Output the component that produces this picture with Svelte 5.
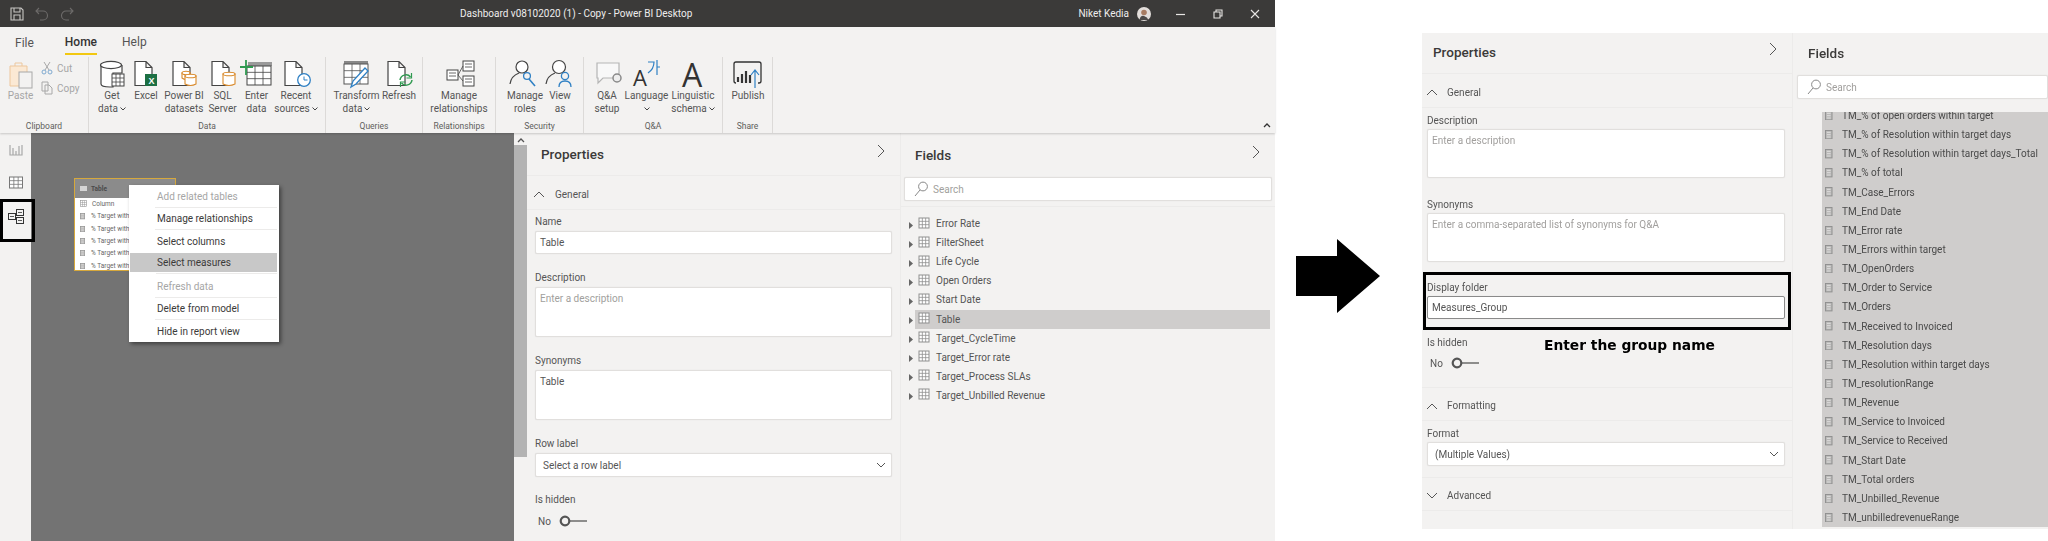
<script>
  const groups = [
    { name: "Data", w: 237, pad: 6, items: [
      { icon: "getdata", w: 34, l: ["Get", "data"], caret: 1 },
      { icon: "excel", w: 34, l: ["Excel"] },
      { icon: "pbi", w: 42, l: ["Power BI", "datasets"] },
      { icon: "sql", w: 35, l: ["SQL", "Server"] },
      { icon: "enter", w: 33, l: ["Enter", "data"] },
      { icon: "recent", w: 46, l: ["Recent", "sources"], caret: 1 }
    ]},
    { name: "Queries", w: 97, pad: 8, items: [
      { icon: "transform", w: 45, l: ["Transform", "data"], caret: 1 },
      { icon: "refresh", w: 40, l: ["Refresh"] }
    ]},
    { name: "Relationships", w: 73, pad: 0, items: [
      { icon: "manage", w: 72, l: ["Manage", "relationships"] }
    ]},
    { name: "Security", w: 88, pad: 10, items: [
      { icon: "roles", w: 38, l: ["Manage", "roles"] },
      { icon: "viewas", w: 32, l: ["View", "as"] }
    ]},
    { name: "Q&A", w: 139, pad: 7, items: [
      { icon: "qa", w: 32, l: ["Q&A", "setup"], off: 0 },
      { icon: "lang", w: 47, l: ["Language", ""], caret: 1 },
      { icon: "ling", w: 46, l: ["Linguistic", "schema"], caret: 1 }
    ]},
    { name: "Share", w: 50, pad: 0, items: [
      { icon: "publish", w: 50, l: ["Publish"] }
    ]}
  ];

  const menu = [
    { t: "Add related tables", off: true, line: true },
    { t: "Manage relationships", line: true },
    { t: "Select columns" },
    { t: "Select measures", sel: true, line: true },
    { t: "Refresh data", off: true, line: true },
    { t: "Delete from model", line: true },
    { t: "Hide in report view" }
  ];

  const tables = ["Error Rate", "FilterSheet", "Life Cycle", "Open Orders", "Start Date", "Table",
    "Target_CycleTime", "Target_Error rate", "Target_Process SLAs", "Target_Unbilled Revenue"];

  const measures = ["TM_% of open orders within target", "TM_% of Resolution within target days",
    "TM_% of Resolution within target days_Total", "TM_% of total", "TM_Case_Errors", "TM_End Date",
    "TM_Error rate", "TM_Errors within target", "TM_OpenOrders", "TM_Order to Service", "TM_Orders",
    "TM_Received to Invoiced", "TM_Resolution days", "TM_Resolution within target days",
    "TM_resolutionRange", "TM_Revenue", "TM_Service to Invoiced", "TM_Service to Received",
    "TM_Start Date", "TM_Total orders", "TM_Unbilled_Revenue", "TM_unbilledrevenueRange"];
</script>

{#snippet doc()}
  <path d="M6 2.5h11l6 6v18H6z M17 2.5v6h6" fill="#fff" stroke="#444" stroke-width="1.2" />
{/snippet}

{#snippet gridIcon(x, y, w, h, c)}
  <rect {x} {y} width={w} height={h} fill="#fff" stroke={c} stroke-width="1" />
  <path d="M{x} {y + h / 3}h{w} M{x} {y + 2 * h / 3}h{w} M{x + w / 3} {y}v{h} M{x + 2 * w / 3} {y}v{h}" stroke={c} stroke-width="0.8" />
{/snippet}

{#snippet can(x, y, w, h)}
  <path d="M{x} {y + 2}v{h - 4}q{w / 2} 3 {w} 0v-{h - 4}z" fill="#fff" stroke="#d98a2b" stroke-width="1.1" />
  <ellipse cx={x + w / 2} cy={y + 2} rx={w / 2} ry="1.8" fill="#fff" stroke="#d98a2b" stroke-width="1.1" />
{/snippet}

{#snippet ribbonIcon(k)}
  <svg class="rib-icon" viewBox="0 0 34 30" width="34" height="30">
    {#if k === "getdata"}
      <path d="M6 6v19q0 3 9 3h3V14h9V6" fill="#fff" stroke="#444" stroke-width="1.2" />
      <ellipse cx="16" cy="6" rx="10.5" ry="3.6" fill="#fff" stroke="#444" stroke-width="1.2" />
      {@render gridIcon(17, 15, 12, 12, "#444")}
    {:else if k === "excel"}
      {@render doc()}
      <rect x="16" y="15" width="12" height="12" fill="#1d7044" />
      <text x="19.5" y="24.5" class="xl">X</text>
    {:else if k === "pbi"}
      {@render doc()}
      <g transform="translate(15 12)">{@render can(0, 0, 8, 9)}</g>
      <g transform="translate(18 15)">{@render can(0, 0, 11, 12)}</g>
    {:else if k === "sql"}
      {@render doc()}
      <g transform="translate(17 13)">{@render can(0, 0, 12, 14)}</g>
    {:else if k === "enter"}
      <path d="M8 3h24v4H8z" fill="#9a9a9a" />
      {@render gridIcon(7, 7, 24, 19, "#444")}
      <path d="M6 1v15 M0 8h13" stroke="#2f9a50" stroke-width="1.8" />
    {:else if k === "recent"}
      {@render doc()}
      <circle cx="25" cy="21" r="6.3" fill="#fff" stroke="#2f80c4" stroke-width="1.3" />
      <path d="M25 17.5V21h3.5" fill="none" stroke="#2f80c4" stroke-width="1" />
    {:else if k === "transform"}
      <rect x="4" y="2" width="24" height="4" fill="#888" />
      {@render gridIcon(4, 5, 24, 20, "#555")}
      <path d="M11 28l2-6 12-13 3 3-12 13z" fill="#fff" stroke="#2f80c4" stroke-width="1.3" />
    {:else if k === "refresh"}
      {@render doc()}
      <path d="M18 21a6 6 0 0 1 10.5-3 M30 21a6 6 0 0 1-10.5 3" fill="none" stroke="#2f9a50" stroke-width="1.5" />
      <path d="M29.5 14v5h-5 M18.5 28v-5h5" fill="none" stroke="#2f9a50" stroke-width="1.2" />
    {:else if k === "manage"}
      <rect x="5" y="11" width="11" height="10" fill="#fff" stroke="#444" />
      <rect x="21" y="2" width="11" height="10" fill="#fff" stroke="#444" />
      <rect x="21" y="17" width="11" height="10" fill="#fff" stroke="#444" />
      <path d="M16 16l5-9 M16 16l5 6 M7 14h7 M7 17h7 M23 5h7 M23 8h7 M23 20h7 M23 23h7" stroke="#444" stroke-width="0.8" fill="none" />
    {:else if k === "roles"}
      <circle cx="14" cy="8" r="6" fill="#fff" stroke="#444" stroke-width="1.2" />
      <path d="M2 25q1-8 9-11" fill="none" stroke="#444" stroke-width="1.2" />
      <circle cx="19" cy="17" r="3.4" fill="none" stroke="#2f80c4" stroke-width="1.3" />
      <path d="M21 20l6 7" stroke="#2f80c4" stroke-width="1.6" />
    {:else if k === "viewas"}
      <circle cx="16" cy="8" r="6.5" fill="#fff" stroke="#444" stroke-width="1.2" />
      <path d="M3 25q1-8 9-11" fill="none" stroke="#444" stroke-width="1.2" />
      <circle cx="22" cy="17" r="3.6" fill="none" stroke="#2f80c4" stroke-width="1.3" />
      <path d="M16 28q0-6 6-6t6 6" fill="none" stroke="#2f80c4" stroke-width="1.3" />
    {:else if k === "qa"}
      <path d="M7 4h22v15H13l-5 5v-5H7z" fill="#f8f8f8" stroke="#b5b5b5" stroke-width="1.2" />
      <circle cx="27" cy="19" r="4" fill="#eee" stroke="#8a8a8a" stroke-width="1.5" />
    {:else if k === "lang"}
      <text x="3" y="27" class="bigA small-a">A</text>
      <path d="M18 3h6q0 7-6 11 M27 1v15 M27 8h3" fill="none" stroke="#2f80c4" stroke-width="1.2" />
    {:else if k === "ling"}
      <text x="6" y="28" class="bigA">A</text>
    {:else if k === "publish"}
      <path d="M5 24q-2 0-2-2V5q0-2 2-2h23q2 0 2 2v17q0 2-2 2h-1" fill="none" stroke="#333" stroke-width="1.3" />
      <path d="M7 23v-5 M11 24v-9 M15 24v-12 M19 24v-8" stroke="#333" stroke-width="2.2" />
      <path d="M24 29V12 M20 16l4-5 4 5" fill="none" stroke="#2f80c4" stroke-width="1.2" />
    {/if}
  </svg>
{/snippet}

{#snippet tableIcon()}
  <svg class="tbl" viewBox="0 0 12 12" width="12" height="12">
    {@render gridIcon(1, 1, 10, 10, "#8f8f8f")}
  </svg>
{/snippet}

{#snippet calc(size)}
  <svg class="calc" viewBox="0 0 8 10" width={size} height={size * 1.25}>
    <rect x="0.5" y="0.5" width="7" height="9" fill="#b9b8b7" stroke="#8f8f8f" />
    <path d="M2 2.5h4 M2 5h4 M2 7.5h4" stroke="#e6e6e6" stroke-width="0.9" />
  </svg>
{/snippet}

{#snippet chev(up)}
  <svg class="sec-chev" viewBox="0 0 12 8" width="12" height="8">
    <path d={up ? "M1 7l5-5 5 5" : "M1 1l5 5 5-5"} fill="none" stroke="#555" stroke-width="1" />
  </svg>
{/snippet}

{#snippet toggle()}
  <div class="toggle-row">
    <span>No</span>
    <svg viewBox="0 0 28 12" width="28" height="12">
      <circle cx="6" cy="6" r="4.3" fill="#f3f2f1" stroke="#555" stroke-width="2.2" />
      <path d="M11 6h17" stroke="#555" stroke-width="1.3" />
    </svg>
  </div>
{/snippet}

{#snippet selectBox(text)}
  <div class="box select">
    <span>{text}</span>
    <svg viewBox="0 0 10 6" width="10" height="6"><path d="M1 1l4 4 4-4" fill="none" stroke="#555" /></svg>
  </div>
{/snippet}

{#snippet panelHead(title)}
  <header class="panel-head">
    <h2>{title}</h2>
    <svg viewBox="0 0 8 14" width="8" height="14"><path d="M1 1l6 6-6 6" fill="none" stroke="#555" /></svg>
  </header>
{/snippet}

{#snippet searchBox()}
  <div class="box search">
    <svg viewBox="0 0 14 16" width="14" height="16">
      <circle cx="9" cy="5.5" r="4.4" fill="none" stroke="#888" />
      <path d="M6 9L1 15" stroke="#888" />
    </svg>
    <span>Search</span>
  </div>
{/snippet}

<div class="page">
  <section class="win">
    <div class="titlebar">
      <div class="qat">
        <svg viewBox="0 0 14 14" width="14" height="14">
          <path d="M1 1h10l2 2v10H1z M4 1v4h6V1 M4 13V8h6v5" fill="none" stroke="#c8c6c4" stroke-width="1.1" />
        </svg>
        <svg viewBox="0 0 14 14" width="14" height="14">
          <path d="M4 1L1 4l3 3 M1 4h7a4 4 0 0 1 0 9H5" fill="none" stroke="#6d6b6a" stroke-width="1.1" />
        </svg>
        <svg viewBox="0 0 14 14" width="14" height="14">
          <path d="M10 1l3 3-3 3 M13 4H6a4 4 0 0 0 0 9h3" fill="none" stroke="#6d6b6a" stroke-width="1.1" />
        </svg>
      </div>
      <div class="doc-title">Dashboard v08102020 (1) - Copy - Power BI Desktop</div>
      <div class="account">
        <span>Niket Kedia</span>
        <svg viewBox="0 0 14 14" width="14" height="14">
          <circle cx="7" cy="7" r="7" fill="#e3dedb" />
          <circle cx="7" cy="5.5" r="2.8" fill="#a87c62" />
          <path d="M2.5 13q1-5 4.5-4t4.5 4" fill="#4d4a48" />
        </svg>
      </div>
      <div class="win-btns">
        <svg viewBox="0 0 10 10" width="10" height="10"><path d="M0 5.5h9" stroke="#e8e6e4" stroke-width="1.2" /></svg>
        <svg viewBox="0 0 10 10" width="10" height="10"><path d="M1 3h6v6H1z M3 3V1h6v6H7" fill="none" stroke="#e8e6e4" stroke-width="1.1" /></svg>
        <svg viewBox="0 0 10 10" width="10" height="10"><path d="M1 1l8 8 M9 1l-8 8" stroke="#e8e6e4" stroke-width="1.1" /></svg>
      </div>
    </div>

    <div class="ribbon">
      <nav class="tabs">
        <span class="tab file">File</span>
        <span class="tab home">Home</span>
        <span class="tab help">Help</span>
      </nav>
      <div class="groups">
        <div class="group clip">
          <div class="items">
            <div class="rib-btn off paste">
              <svg class="rib-icon" viewBox="0 0 26 30" width="26" height="30">
                <path d="M2 7h17v20H2z" fill="#fbe9d4" stroke="#edc79c" />
                <path d="M7 7V4h7v3" fill="none" stroke="#edc79c" />
                <rect x="11" y="13" width="13" height="16" fill="#f3f2f1" stroke="#a8a8a8" />
              </svg>
              <span>Paste</span>
            </div>
            <div class="clip-small">
              <div class="off-row">
                <svg viewBox="0 0 12 14" width="12" height="14">
                  <path d="M3 1l5 8 M9 1L4 9" stroke="#a8a8a8" fill="none" />
                  <circle cx="3" cy="11" r="2" fill="none" stroke="#7fa9cf" />
                  <circle cx="9" cy="11" r="2" fill="none" stroke="#7fa9cf" />
                </svg>
                <span>Cut</span>
              </div>
              <div class="off-row">
                <svg viewBox="0 0 12 14" width="12" height="14">
                  <path d="M1 1h6v9H1z M4 4h4l3 3v6H4z" fill="#f3f2f1" stroke="#a8a8a8" />
                </svg>
                <span>Copy</span>
              </div>
            </div>
          </div>
          <div class="group-name">Clipboard</div>
        </div>
        {#each groups as g}
          <div class="group" style="width:{g.w}px">
            <div class="items" style="padding-left:{g.pad}px">
              {#each g.items as b}
                <div class="rib-btn" style="width:{b.w}px">
                  {@render ribbonIcon(b.icon)}
                  {#each b.l as line, i}
                    <span>{line}{#if b.caret && i === b.l.length - 1}<svg class="mini" viewBox="0 0 6 4" width="6" height="4"><path d="M0.5 0.5L3 3l2.5-2.5" fill="none" stroke="#444" /></svg>{/if}</span>
                  {/each}
                </div>
              {/each}
            </div>
            <div class="group-name">{g.name}</div>
          </div>
        {/each}
      </div>
      <svg class="collapse" viewBox="0 0 8 6" width="8" height="6"><path d="M1 5l3-3 3 3" fill="none" stroke="#333" stroke-width="1.3" /></svg>
    </div>

    <div class="work">
      <aside class="rail">
        <svg viewBox="0 0 14 12" width="14" height="12">
          <path d="M1 1v10h12V1 M4 11V4 M7 11V7 M10 11V2" fill="none" stroke="#a8a8a8" stroke-width="1.2" />
        </svg>
        <svg viewBox="0 0 14 12" width="14" height="13">
          {@render gridIcon(0.5, 0.5, 13, 11, "#777")}
        </svg>
        <svg viewBox="0 0 16 15" width="16" height="15">
          <rect x="0.5" y="4.5" width="7" height="6" fill="none" stroke="#333" />
          <rect x="8.5" y="0.5" width="7" height="6" fill="#f3f2f1" stroke="#333" />
          <rect x="8.5" y="8.5" width="7" height="6" fill="#f3f2f1" stroke="#333" />
          <path d="M2 7.5h4 M10 3.5h4 M10 11.5h4" stroke="#333" stroke-width="0.8" />
        </svg>
      </aside>
      <div class="mark-box"></div>

      <div class="canvas">
        <div class="card">
          <div class="card-head">
            <svg viewBox="0 0 7 5" width="7" height="5"><path d="M0 0h7v5H0z" fill="#d5d5d5" /></svg>
            <span>Table</span>
          </div>
          <div class="card-row col">{@render tableIcon()}<span>Column</span></div>
          {#each [0, 1, 2, 3, 4] as n}
            <div class="card-row">{@render calc(5)}<span>% Target within</span></div>
          {/each}
        </div>
        <ul class="ctx">
          {#each menu as m}
            <li class:off={m.off} class:sel={m.sel} class:line={m.line}><span>{m.t}</span></li>
          {/each}
        </ul>
      </div>

      <div class="scroll">
        <svg viewBox="0 0 8 6" width="8" height="6"><path d="M1 5l3-3 3 3" fill="none" stroke="#555" stroke-width="1.3" /></svg>
        <div class="thumb"></div>
      </div>

      <div class="props">
        {@render panelHead("Properties")}
        <div class="sec">{@render chev(true)}<span>General</span></div>
        <div class="form">
          <label class="first">Name</label>
          <div class="box input">Table</div>
          <label>Description</label>
          <div class="box area ph">Enter a description</div>
          <label>Synonyms</label>
          <div class="box area">Table</div>
          <label>Row label</label>
          {@render selectBox("Select a row label")}
          <label class="tight">Is hidden</label>
          {@render toggle()}
        </div>
      </div>

      <div class="fields">
        {@render panelHead("Fields")}
        {@render searchBox()}
        <ul class="tree">
          {#each tables as t}
            <li class:cur={t === "Table"}>
              <svg class="caret" viewBox="0 0 4 7" width="4" height="7"><path d="M0 0l4 3.5L0 7z" fill="#666" /></svg>
              <div class="tree-label">{@render tableIcon()}<span>{t}</span></div>
            </li>
          {/each}
        </ul>
      </div>
    </div>
  </section>

  <div class="arrow-col">
    <svg viewBox="0 0 84 74" width="84" height="74"><path d="M0 17h41V0l43 37-43 37V57H0z" fill="#000" /></svg>
  </div>

  <section class="shot">
    <div class="props small">
      {@render panelHead("Properties")}
      <div class="sec">{@render chev(true)}<span>General</span></div>
      <div class="form">
        <label class="first">Description</label>
        <div class="box area ph">Enter a description</div>
        <label class="syn">Synonyms</label>
        <div class="box area ph">Enter a comma-separated list of synonyms for Q&amp;A</div>
        <div class="folder">
          <label>Display folder</label>
          <div class="box input edit">Measures_Group</div>
        </div>
        <label class="hid">Is hidden</label>
        <strong class="note">Enter the group name</strong>
        {@render toggle()}
      </div>
      <div class="sec fmt">{@render chev(true)}<span>Formatting</span></div>
      <div class="form">
        <label class="first">Format</label>
        {@render selectBox("(Multiple Values)")}
      </div>
      <div class="sec adv">{@render chev(false)}<span>Advanced</span></div>
    </div>
    <div class="fields small">
      {@render panelHead("Fields")}
      {@render searchBox()}
      <div class="measures">
        <ul>
          {#each measures as m}
            <li>{@render calc(7.5)}<span>{m}</span></li>
          {/each}
        </ul>
      </div>
    </div>
  </section>
</div>

<style>
  :global(body) {
    margin: 0;
    background: #fff;
  }
  .page {
    display: flex;
    position: relative;
    width: 2048px;
    height: 541px;
    overflow: hidden;
    font-family: Roboto, "Noto Sans", sans-serif;
    color: #3b3a39;
    filter: blur(0.45px);
  }
  svg {
    display: block;
    flex: none;
  }

  /* left window */
  .win {
    width: 1275px;
    flex: none;
    display: flex;
    flex-direction: column;
    background: #f3f2f1;
  }
  .titlebar {
    height: 27px;
    background: #3b3a39;
    display: flex;
    align-items: center;
    position: relative;
    color: #eeeded;
    font-size: 10px;
    flex: none;
  }
  .qat {
    display: flex;
    gap: 11px;
    padding-left: 10px;
  }
  .doc-title {
    position: absolute;
    left: 460px;
    white-space: nowrap;
  }
  .account {
    margin-left: auto;
    display: flex;
    align-items: center;
    gap: 8px;
  }
  .win-btns {
    display: flex;
    gap: 27px;
    margin-left: 25px;
    padding-right: 15px;
  }

  /* ribbon */
  .ribbon {
    height: 106px;
    flex: none;
    position: relative;
    box-shadow: 0 1px 2px rgba(0, 0, 0, 0.18);
    z-index: 2;
    background: #f3f2f1;
  }
  .tabs {
    height: 30px;
    display: flex;
    font-size: 12px;
  }
  .tab {
    position: relative;
    padding-top: 6px;
  }
  .file {
    margin-left: 15px;
    padding-top: 9px;
    color: #555;
  }
  .home {
    margin-left: 31px;
    font-weight: 500;
    height: 18px;
    padding-top: 8px;
    border-bottom: 2px solid #f2c811;
    color: #333;
  }
  .help {
    margin-left: 25px;
    padding-top: 8px;
    color: #555;
  }
  .groups {
    display: flex;
    height: 76px;
  }
  .group {
    border-right: 1px solid #dcdad8;
    box-sizing: border-box;
    display: flex;
    flex-direction: column;
    flex: none;
  }
  .clip {
    width: 89px;
  }
  .items {
    display: flex;
    flex: 1;
    align-items: flex-start;
  }
  .rib-btn {
    display: flex;
    flex-direction: column;
    align-items: center;
    font-size: 10px;
    line-height: 13.4px;
    color: #555;
    flex: none;
    white-space: nowrap;
  }
  .rib-btn span {
    display: flex;
    align-items: center;
    gap: 2px;
    height: 13.4px;
  }
  .rib-icon {
    margin: 2px 0 0;
    height: 30px;
  }
  .paste {
    width: 41px;
    color: #a6a6a6;
  }
  .clip-small {
    padding-top: 4px;
    display: flex;
    flex-direction: column;
    gap: 6px;
    font-size: 10px;
    color: #a6a6a6;
  }
  .off-row {
    display: flex;
    align-items: center;
    gap: 4px;
  }
  .group-name {
    height: 14px;
    font-size: 8.5px;
    line-height: 14px;
    text-align: center;
    color: #605e5c;
  }
  .collapse {
    position: absolute;
    right: 4px;
    bottom: 5px;
  }
  .xl {
    font: bold 9px "Liberation Sans", sans-serif;
    fill: #fff;
  }
  .bigA {
    font: 32px "Open Sans", sans-serif;
    fill: #333;
  }
  .small-a {
    font-size: 22px;
  }

  /* main row */
  .work {
    flex: 1;
    display: flex;
    position: relative;
    min-height: 0;
  }
  .rail {
    width: 31px;
    flex: none;
    display: flex;
    flex-direction: column;
    align-items: center;
    padding-top: 11px;
    gap: 20px;
    box-sizing: border-box;
  }
  .mark-box {
    position: absolute;
    left: 0;
    top: 66px;
    width: 35px;
    height: 43px;
    border: 3px solid #000;
    box-sizing: border-box;
    z-index: 1;
  }
  .canvas {
    width: 483px;
    flex: none;
    background: #737373;
    position: relative;
  }
  .card {
    position: absolute;
    left: 43px;
    top: 45px;
    width: 102px;
    height: 93px;
    box-sizing: border-box;
    border: 1px solid #d6a83c;
    background: #fff;
    font-size: 6.5px;
    color: #666;
  }
  .card-head {
    height: 19px;
    background: #8b8b8b;
    display: flex;
    align-items: center;
    gap: 4px;
    padding-left: 5px;
    font-weight: 700;
    color: #4a4a4a;
  }
  .card-row {
    height: 12.3px;
    display: flex;
    align-items: center;
    gap: 6px;
    padding-left: 5px;
    white-space: nowrap;
  }
  .card-row.col .tbl {
    width: 7px;
    height: 7px;
    margin-right: -1px;
  }
  .ctx {
    position: absolute;
    left: 98px;
    top: 52px;
    width: 150px;
    height: 157px;
    margin: 0;
    padding: 0;
    box-sizing: border-box;
    list-style: none;
    background: #fff;
    box-shadow: 2px 2px 4px rgba(0, 0, 0, 0.45);
    font-size: 10px;
    color: #3b3a39;
  }
  .ctx li {
    height: 22.5px;
    padding-left: 28px;
    margin-right: 2px;
    display: flex;
    align-items: center;
    position: relative;
    white-space: nowrap;
  }
  .ctx li.line::after {
    content: "";
    position: absolute;
    left: 26px;
    right: 0;
    bottom: 0;
    border-bottom: 1px solid #ecebea;
  }
  .ctx li.sel {
    background: #c8c8c8;
    margin: 0 2px 3px 1px;
    padding-left: 27px;
    height: 19.5px;
  }
  .ctx li.sel::after {
    bottom: -2px;
  }
  .ctx li.off {
    color: #a6a6a6;
  }
  .scroll {
    width: 13px;
    flex: none;
    background: #f3f2f1;
    display: flex;
    flex-direction: column;
    align-items: center;
    padding-top: 4px;
    box-sizing: border-box;
  }
  .thumb {
    width: 100%;
    height: 312px;
    margin-top: 2px;
    background: #b3b3b3;
  }

  /* property and field panes */
  .props {
    width: 374px;
    flex: none;
    box-sizing: border-box;
    border-right: 1px solid #ecebea;
  }
  .panel-head {
    height: 43px;
    box-sizing: border-box;
    border-bottom: 1px solid #ecebea;
    display: flex;
    align-items: center;
    justify-content: space-between;
    padding: 0 15px 0 14px;
  }
  .panel-head svg {
    margin-top: -6px;
  }
  h2 {
    margin: 0;
    font-size: 13.5px;
    font-weight: 500;
    color: #3b3a39;
  }
  .sec {
    height: 34px;
    box-sizing: border-box;
    border-bottom: 1px solid #ecebea;
    display: flex;
    align-items: center;
    gap: 10px;
    padding: 3px 0 0 6px;
    font-size: 10px;
    color: #555;
  }
  .form {
    padding-left: 8px;
    width: 360px;
    display: flex;
    flex-direction: column;
  }
  label {
    display: block;
    height: 14px;
    line-height: 14px;
    font-size: 10px;
    color: #555;
    margin: 17px 0 2px;
  }
  label.first {
    margin-top: 5px;
  }
  label.tight {
    margin-top: 16px;
  }
  .box {
    background: #fff;
    box-sizing: border-box;
    border: 1px solid #e1dfdd;
    border-radius: 2px;
    box-shadow: 0 0 1px rgba(0, 0, 0, 0.12);
    font-size: 10px;
    color: #555;
    width: 357px;
  }
  .input {
    height: 23px;
    line-height: 21px;
    padding-left: 4px;
  }
  .area {
    height: 50px;
    padding: 3px 4px;
    line-height: 16px;
  }
  .ph {
    color: #a19f9d;
  }
  .select {
    height: 24px;
    display: flex;
    align-items: center;
    justify-content: space-between;
    padding: 0 5px 0 7px;
  }
  .toggle-row {
    display: flex;
    align-items: center;
    gap: 8px;
    padding: 4px 0 0 3px;
    font-size: 10px;
    color: #555;
    height: 20px;
    box-sizing: border-box;
  }
  .fields {
    flex: 1;
    min-width: 0;
    display: flex;
    flex-direction: column;
  }
  .fields .panel-head {
    border-bottom: none;
  }
  .search {
    width: auto;
    margin: 1px 3px 0;
    height: 24px;
    display: flex;
    align-items: center;
    gap: 5px;
    padding-left: 9px;
    color: #a19f9d;
    flex: none;
  }
  .tree {
    list-style: none;
    margin: 5px 0 0;
    padding: 7px 0 0;
    border-top: 1px solid #ecebea;
    font-size: 10px;
    color: #555;
  }
  .tree li {
    height: 19.1px;
    display: flex;
    align-items: center;
    padding: 0 5px 0 8px;
  }
  .caret {
    margin-top: 3px;
  }
  .tree-label {
    flex: 1;
    height: 19px;
    margin-left: 2px;
    display: flex;
    align-items: center;
    gap: 6px;
    padding-left: 3px;
  }
  .tree li.cur .tree-label {
    background: #cfcdcc;
  }
  .tbl {
    margin-top: -2px;
  }

  /* arrow between the two pictures */
  .arrow-col {
    width: 147px;
    flex: none;
    display: flex;
    align-items: flex-start;
    padding: 239px 0 0 21px;
    box-sizing: border-box;
  }

  /* right crop */
  .shot {
    display: flex;
    width: 626px;
    height: 496px;
    margin-top: 33px;
    background: #f3f2f1;
    flex: none;
  }
  .props.small {
    width: 371px;
  }
  .small .panel-head {
    height: 41px;
    padding-left: 11px;
    padding-bottom: 2px;
  }
  .small .sec {
    gap: 9px;
    padding-left: 4px;
  }
  .small .form {
    padding-left: 5px;
    width: 366px;
  }
  .small .box {
    width: 358px;
  }
  .small .area {
    height: 49px;
  }
  .small label {
    margin-bottom: 1px;
  }
  .small label.first {
    margin-top: 6px;
  }
  .small label.syn {
    margin-top: 20px;
  }
  .folder {
    margin: 10px 0 0 -4px;
    width: 368px;
    height: 58px;
    box-sizing: border-box;
    border: 3px solid #000;
    padding-left: 1px;
  }
  .small .folder label {
    margin: 6px 0 1px -1px;
    padding-left: 1px;
  }
  .small .edit {
    height: 23px;
    border-color: #8a8a8a;
    padding-left: 4px;
    width: 358px;
  }
  .small label.hid {
    margin-top: 6px;
  }
  .note {
    position: absolute;
    left: 1544px;
    top: 337px;
    font: bold 13.8px "DejaVu Sans", sans-serif;
    color: #000;
    white-space: nowrap;
  }
  .small .toggle-row {
    padding-left: 3px;
  }
  .sec.fmt {
    border-top: 1px solid #ecebea;
    margin-top: 16px;
  }
  .small .select {
    height: 24px;
  }
  .sec.adv {
    border-top: 1px solid #ecebea;
    margin-top: 11px;
  }
  .fields.small .search {
    margin: 1px 0 0 4px;
    width: 251px;
  }
  .fields.small .panel-head {
    padding-left: 15px;
  }
  .fields.small .panel-head svg {
    display: none;
  }
  .measures {
    margin: 13px 0 0 29px;
    height: 415px;
    overflow: hidden;
    background: #cfcdcc;
    position: relative;
  }
  .measures ul {
    list-style: none;
    margin: -6px 0 0;
    padding: 0;
    font-size: 10px;
    color: #4a4a4a;
  }
  .measures li {
    height: 19.15px;
    display: flex;
    align-items: center;
    gap: 9.5px;
    padding-left: 3px;
    white-space: nowrap;
  }
</style>
